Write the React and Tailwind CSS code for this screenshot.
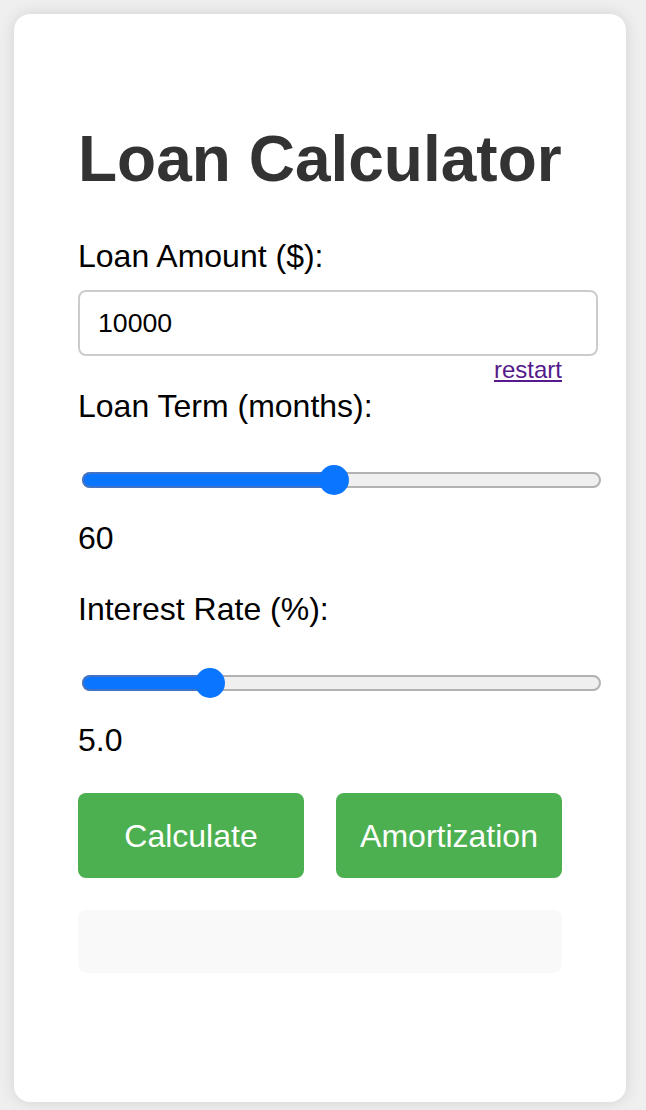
import React from "react";

function Slider({ fraction }) {
  // track is 519px wide, thumb 30px; thumb center runs from 15 to 504
  const center = 15 + fraction * 489;
  return (
    <div className="relative ml-[4px] flex h-[34px] w-[519px] items-center">
      <div className="h-[16px] w-full rounded-full border-2 border-[#b2b2b2] bg-[#efefef]" />
      <div
        className="absolute left-0 top-[9px] h-[16px] rounded-l-full border-2 border-r-0 border-[#4472c4] bg-[#0a75ff]"
        style={{ width: center }}
      />
      <div
        className="absolute top-[2px] h-[30px] w-[30px] rounded-full bg-[#0a75ff]"
        style={{ left: center - 15 }}
      />
    </div>
  );
}

export default function App() {
  return (
    <div
      className="min-h-screen bg-[#efefef] px-[14px] pt-[14px]"
      style={{ fontFamily: '"Liberation Sans", Arial, sans-serif' }}
    >
      <div className="h-[1088px] w-[612px] rounded-[16px] bg-white px-[64px] pt-[64px] shadow-[0_0_16px_rgba(0,0,0,0.12)]">
        <h1 className="mt-[44px] text-[64px] font-bold leading-[74px] text-[#333]">
          Loan Calculator
        </h1>

        {/* Loan amount */}
        <label className="mt-[42px] block text-[32px] leading-[37px] text-black">
          Loan Amount ($):
        </label>
        <div className="mt-[15px] flex h-[66px] w-[520px] items-center rounded-[8px] border-2 border-[#cccccc] px-[18px] text-[26.67px] text-black">
          10000
        </div>
        <div className="flex h-[28px] justify-end">
          <a href="#" className="text-[24px] leading-[28px] text-[#551a8b] underline">
            restart
          </a>
        </div>

        {/* Term */}
        <label className="mt-[4px] block text-[32px] leading-[37px] text-black">
          Loan Term (months):
        </label>
        <div className="mt-[38px]">
          <Slider fraction={0.485} />
        </div>
        <div className="mt-[23px] text-[32px] leading-[37px] text-black">60</div>

        {/* Rate */}
        <label className="mt-[34px] block text-[32px] leading-[37px] text-black">
          Interest Rate (%):
        </label>
        <div className="mt-[38px]">
          <Slider fraction={0.231} />
        </div>
        <div className="mt-[22px] text-[32px] leading-[37px] text-black">5.0</div>

        <div className="mt-[34px] flex gap-[32px]">
          <button className="h-[85px] w-[226px] rounded-[8px] bg-[#4caf50] text-[32px] text-white">
            Calculate
          </button>
          <button className="h-[85px] w-[226px] rounded-[8px] bg-[#4caf50] text-[32px] text-white">
            Amortization
          </button>
        </div>

        <div className="mt-[32px] h-[63px] w-[484px] rounded-[8px] bg-[#f9f9f9]" />
      </div>
    </div>
  );
}
